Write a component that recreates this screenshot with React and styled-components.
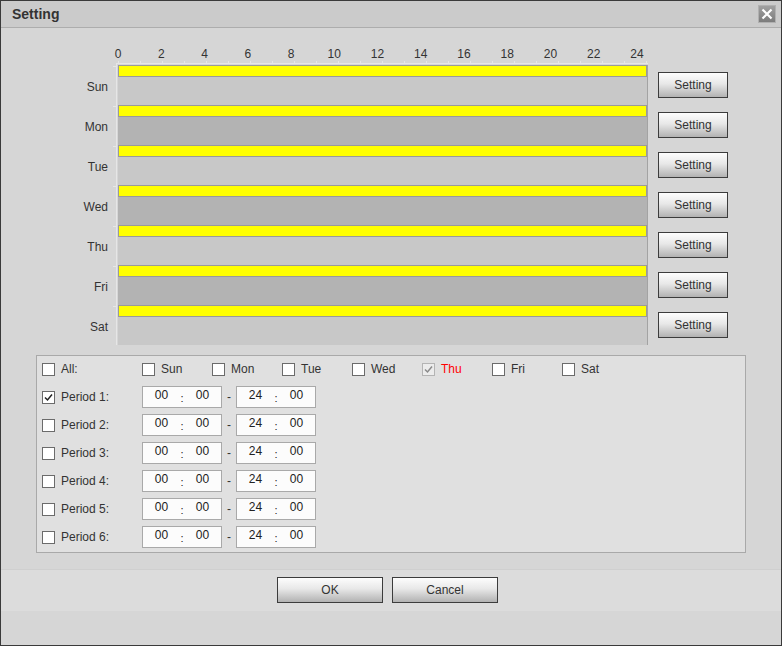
import React from "react";
import styled, { createGlobalStyle } from "styled-components";

const GlobalStyle = createGlobalStyle`
  html, body {
    margin: 0;
    padding: 0;
    background: #d6d6d6;
  }
  body {
    font-family: "Liberation Sans", Arial, sans-serif;
    font-size: 12px;
    color: #333;
  }
`;

const Window = styled.div`
  box-sizing: border-box;
  width: 782px;
  height: 646px;
  border: 1px solid #3a3a3a;
  background: #d6d6d6;
  display: flex;
  flex-direction: column;
`;

const TitleBar = styled.div`
  height: 26px;
  flex-shrink: 0;
  border-bottom: 1px solid #adadad;
  background: #cbcbcb;
  display: flex;
  align-items: center;
  justify-content: space-between;
  padding: 0 5px 0 11px;
`;

const Title = styled.h1`
  margin: 0;
  font-size: 14px;
  font-weight: bold;
  color: #333;
`;

const CloseButton = styled.button`
  box-sizing: border-box;
  width: 18px;
  height: 18px;
  padding: 0;
  border: 1px solid #b0b0b0;
  background: linear-gradient(to bottom, #a0a0a0, #7c7c7c);
  display: flex;
  align-items: center;
  justify-content: center;
  cursor: pointer;
`;

const Body = styled.div`
  flex: 1;
  padding-top: 19px;
`;

const Scale = styled.div`
  display: flex;
  margin-left: 95.4px;
`;

const ScaleLabel = styled.span`
  width: 43.25px;
  text-align: center;
  line-height: 14px;
`;

const Ruler = styled.svg`
  display: block;
  margin-left: 115px;
`;

const DayRow = styled.div`
  display: flex;
  height: 40px;
`;

const DayLabel = styled.div`
  width: 107px;
  text-align: right;
  align-self: center;
  padding-top: 4px;
`;

const Track = styled.div`
  position: relative;
  margin-left: 8px;
  border-left: 1px solid #e6e6e6;
  padding-left: 1px;

  &::before {
    content: "";
    position: absolute;
    top: 1px;
    left: -4px;
    width: 3px;
    height: 1px;
    background: #e6e6e6;
  }
`;

const Lane = styled.div`
  width: 529px;
  height: 100%;
  background: ${(p) => p.$shade};
  border-right: 1px solid #a3a3a3;
`;

const Bar = styled.div`
  box-sizing: border-box;
  height: 12px;
  border: 1px solid #9a9a9a;
  background: #ffff00;
`;

const GrayButton = styled.button`
  box-sizing: border-box;
  width: ${(p) => p.$width}px;
  height: 26px;
  padding: 0;
  border: 1px solid #3c3c3c;
  background: linear-gradient(to bottom, #fdfdfd 0%, #e8e8e8 45%, #b2b2b2 100%);
  font-family: inherit;
  font-size: 12px;
  color: #333;
  cursor: pointer;
`;

const SetButton = styled(GrayButton)`
  align-self: center;
  margin-left: 10px;
`;

const Panel = styled.div`
  box-sizing: border-box;
  width: 710px;
  margin: 10px 0 0 35px;
  border: 1px solid #a9a9a9;
  background: #e0e0e0;
  padding: 1px 0 1px 5px;
`;

const OptionRow = styled.div`
  display: flex;
  align-items: center;
  height: ${(p) => p.$height}px;
  margin-bottom: ${(p) => p.$gap || 0}px;
`;

const Box = styled.span`
  box-sizing: border-box;
  width: 13px;
  height: 13px;
  flex-shrink: 0;
  border: 1px solid ${(p) => (p.$disabled ? "#b4b4b4" : "#6b6b6b")};
  background: ${(p) => (p.$disabled ? "#ececec" : "#fff")};
  display: flex;
  align-items: center;
  justify-content: center;
`;

const LeadLabel = styled.span`
  width: 81px;
  margin-left: 6px;
`;

const DayOption = styled.label`
  width: 70px;
  display: flex;
  align-items: center;
`;

const OptionText = styled.span`
  margin-left: 6px;
  color: ${(p) => (p.$active ? "#ff0000" : "#333")};
`;

const TimeBox = styled.div`
  box-sizing: border-box;
  width: 80px;
  height: 22px;
  border: 1px solid #a9a9a9;
  background: #fcfcfc;
  display: flex;
  color: #222;
`;

const TimeField = styled.span`
  width: 37px;
  text-align: center;
  line-height: 16px;
`;

const Colon = styled.span`
  width: 4px;
  text-align: center;
  line-height: 23px;
  font-size: 11px;
`;

const Dash = styled.span`
  width: 14px;
  text-align: center;
`;

const Footer = styled.div`
  box-sizing: border-box;
  height: 42px;
  flex-shrink: 0;
  border-top: 1px solid #cfcfcf;
  background: #dcdcdc;
  display: flex;
  align-items: flex-start;
  justify-content: center;
  gap: 9px;
  padding: 7px 7px 0 0;
`;

const BottomStrip = styled.div`
  height: 34px;
  flex-shrink: 0;
`;

const days = ["Sun", "Mon", "Tue", "Wed", "Thu", "Fri", "Sat"];
const hours = Array.from({ length: 13 }, (_, i) => i * 2);

const Check = ({ checked, disabled }) => (
  <Box $disabled={disabled}>
    {checked && (
      <svg width="11" height="11" viewBox="0 0 11 11">
        <path
          d="M2 5.5 L4.5 8 L9 2.5"
          fill="none"
          stroke={disabled ? "#8a8a8a" : "#222"}
          strokeWidth="1.5"
        />
      </svg>
    )}
  </Box>
);

const Time = ({ h, m }) => (
  <TimeBox>
    <TimeField>{h}</TimeField>
    <Colon>:</Colon>
    <TimeField>{m}</TimeField>
  </TimeBox>
);

const App = () => (
  <>
    <GlobalStyle />
    <Window>
      <TitleBar>
        <Title>Setting</Title>
        <CloseButton aria-label="close">
          <svg width="12" height="12" viewBox="0 0 12 12">
            <path d="M1.5 1.5 L10.5 10.5 M10.5 1.5 L1.5 10.5" stroke="#fff" strokeWidth="2.2" />
          </svg>
        </CloseButton>
      </TitleBar>

      <Body>
        <Scale>
          {hours.map((h) => (
            <ScaleLabel key={h}>{h}</ScaleLabel>
          ))}
        </Scale>
        <Ruler width="532" height="4">
          <line x1="0" y1="2.5" x2="532" y2="2.5" stroke="#e6e6e6" />
          <line x1="0.5" y1="2" x2="0.5" y2="4" stroke="#e6e6e6" />
          {Array.from({ length: 25 }, (_, i) => (
            <line key={i} x1={2.5 + i * 22} y1="0" x2={2.5 + i * 22} y2="2" stroke="#e6e6e6" />
          ))}
        </Ruler>

        {days.map((d, i) => (
          <DayRow key={d}>
            <DayLabel>{d}</DayLabel>
            <Track>
              <Lane $shade={i % 2 ? "#b3b3b3" : "#c8c8c8"}>
                <Bar />
              </Lane>
            </Track>
            <SetButton $width={70}>Setting</SetButton>
          </DayRow>
        ))}

        <Panel>
          <OptionRow $height={24} $gap={2}>
            <Check />
            <LeadLabel>All:</LeadLabel>
            {days.map((d) => (
              <DayOption key={d}>
                <Check checked={d === "Thu"} disabled={d === "Thu"} />
                <OptionText $active={d === "Thu"}>{d}</OptionText>
              </DayOption>
            ))}
          </OptionRow>
          {[1, 2, 3, 4, 5, 6].map((n) => (
            <OptionRow key={n} $height={28}>
              <Check checked={n === 1} />
              <LeadLabel>Period {n}:</LeadLabel>
              <Time h="00" m="00" />
              <Dash>-</Dash>
              <Time h="24" m="00" />
            </OptionRow>
          ))}
        </Panel>
      </Body>

      <Footer>
        <GrayButton $width={106}>OK</GrayButton>
        <GrayButton $width={106}>Cancel</GrayButton>
      </Footer>
      <BottomStrip />
    </Window>
  </>
);

export default App;
